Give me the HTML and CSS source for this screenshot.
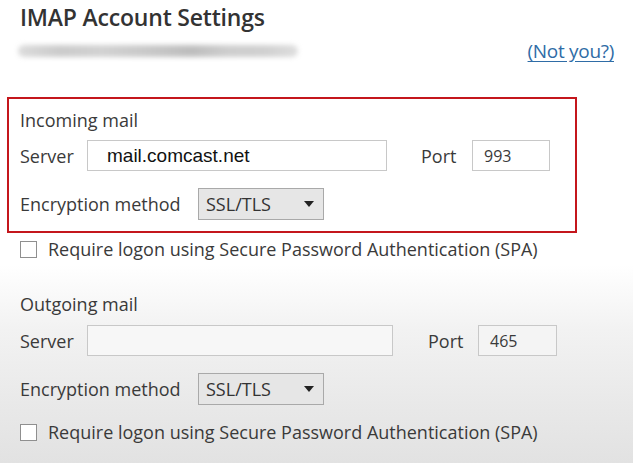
FILE: index.html
```html
<!DOCTYPE html>
<html>
<head>
<meta charset="utf-8">
<link rel="stylesheet" href="styles.css">
</head>
<body>
<div class="page">
  <h1 class="title">IMAP Account Settings</h1>
  <div class="account-row">
    <div class="blurred-email"></div>
    <a class="not-you" href="#">(Not you?)</a>
  </div>

  <div class="section highlighted">
    <div class="section-title">Incoming mail</div>
    <div class="field-row server-row">
      <span class="label label-server">Server</span>
      <div class="textbox server-box server-box-in"><span class="server-value">mail.comcast.net</span></div>
      <span class="label label-port port-in">Port</span>
      <div class="textbox port-box"><span>993</span></div>
    </div>
    <div class="field-row enc-row">
      <span class="label label-enc">Encryption method</span>
      <div class="dropdown"><span>SSL/TLS</span><span class="arrow"></span></div>
    </div>
  </div>
  <label class="check-row check-in">
    <span class="checkbox"></span>
    <span class="check-text">Require logon using Secure Password Authentication (SPA)</span>
  </label>

  <div class="section outgoing">
    <div class="section-title">Outgoing mail</div>
    <div class="field-row server-row">
      <span class="label label-server">Server</span>
      <div class="textbox server-box server-box-out"></div>
      <span class="label label-port port-out">Port</span>
      <div class="textbox port-box port-box-out"><span>465</span></div>
    </div>
    <div class="field-row enc-row">
      <span class="label label-enc">Encryption method</span>
      <div class="dropdown"><span>SSL/TLS</span><span class="arrow"></span></div>
    </div>
  </div>
  <label class="check-row check-out">
    <span class="checkbox"></span>
    <span class="check-text">Require logon using Secure Password Authentication (SPA)</span>
  </label>
</div>
</body>
</html>
```
FILE: styles.css
```css
html, body {
  margin: 0;
  padding: 0;
}
body {
  width: 633px;
  height: 463px;
  overflow: hidden;
  background: linear-gradient(180deg, #ffffff 0px, #ffffff 265px, #f2f2f2 330px, #e8e8e8 410px, #e2e2e2 463px);
  font-family: "Open Sans", "Noto Sans", sans-serif;
  color: #333;
}
.page {
  position: relative;
  height: 463px;
}
.title {
  margin: 0;
  padding: 2px 0 0 20px;
  font-size: 23px;
  line-height: 31px;
  font-weight: 600;
  color: #333;
  letter-spacing: -0.2px;
}
.account-row {
  display: flex;
  align-items: center;
  height: 26px;
  margin-top: 5px;
  padding: 0 19px 0 18px;
}
.blurred-email {
  width: 280px;
  height: 12px;
  border-radius: 6px;
  background: linear-gradient(90deg, #dcdcdc 0%, #cbcbcb 15%, #d2d2d2 30%, #c6c6c6 50%, #bdbdbd 62%, #cecece 75%, #d0d0d0 88%, #dedede 100%);
  filter: blur(2.5px);
}
.not-you {
  margin-left: auto;
  font-size: 19px;
  color: #2f6ca6;
  text-decoration: underline;
  text-underline-offset: 3px;
  letter-spacing: -0.3px;
}
.section {
  box-sizing: border-box;
}
.highlighted {
  margin: 33px 0 0 7px;
  width: 570px;
  height: 136px;
  border: 2px solid #c4161c;
  padding: 10px 0 0 11px;
}
.section-title {
  font-size: 18px;
  line-height: 22px;
  height: 22px;
  color: #3a3a3a;
}
.field-row {
  display: flex;
  align-items: center;
}
.label {
  font-size: 18px;
  color: #3a3a3a;
}
.label-server {
  width: 67px;
}
.label-enc {
  width: 178px;
}
.highlighted .server-row {
  margin-top: 9px;
  height: 31px;
}
.highlighted .enc-row {
  margin-top: 17px;
  height: 32px;
}
.textbox {
  box-sizing: border-box;
  height: 31px;
  border: 1px solid #c8c8c8;
  background: #fff;
  display: flex;
  align-items: center;
}
.server-box-in {
  width: 300px;
  padding-left: 19px;
}
.server-value {
  font-family: "Liberation Sans", Arial, sans-serif;
  font-size: 19px;
  color: #111;
}
.port-in {
  margin-left: 34px;
  width: 51px;
}
.port-box {
  width: 78px;
  padding-left: 11px;
  font-size: 16px;
  color: #3a3a3a;
}
.dropdown {
  box-sizing: border-box;
  width: 126px;
  height: 32px;
  border: 1px solid #a9a9a9;
  background: #e6e6e6;
  display: flex;
  align-items: center;
  padding: 0 9px 0 7px;
  font-size: 18px;
  color: #333;
}
.arrow {
  margin-left: auto;
  width: 0;
  height: 0;
  border-left: 5px solid transparent;
  border-right: 5px solid transparent;
  border-top: 6px solid #222;
}
.check-row {
  display: flex;
  align-items: center;
  padding-left: 20px;
  height: 20px;
}
.check-in {
  margin-top: 6px;
}
.checkbox {
  box-sizing: border-box;
  width: 17px;
  height: 17px;
  border: 1px solid #8f8f8f;
  background: #fff;
}
.check-text {
  margin-left: 11px;
  font-size: 18px;
  color: #3a3a3a;
}
.outgoing {
  margin-top: 34px;
  padding-left: 20px;
}
.outgoing .server-row {
  margin-top: 10px;
  height: 31px;
}
.server-box-out {
  width: 306px;
  background: #f7f7f7;
}
.port-out {
  margin-left: 35px;
  width: 50px;
}
.port-box-out {
  width: 79px;
  background: #f4f4f4;
}
.outgoing .enc-row {
  margin-top: 17px;
  height: 32px;
}
.check-out {
  margin-top: 17px;
}
```
